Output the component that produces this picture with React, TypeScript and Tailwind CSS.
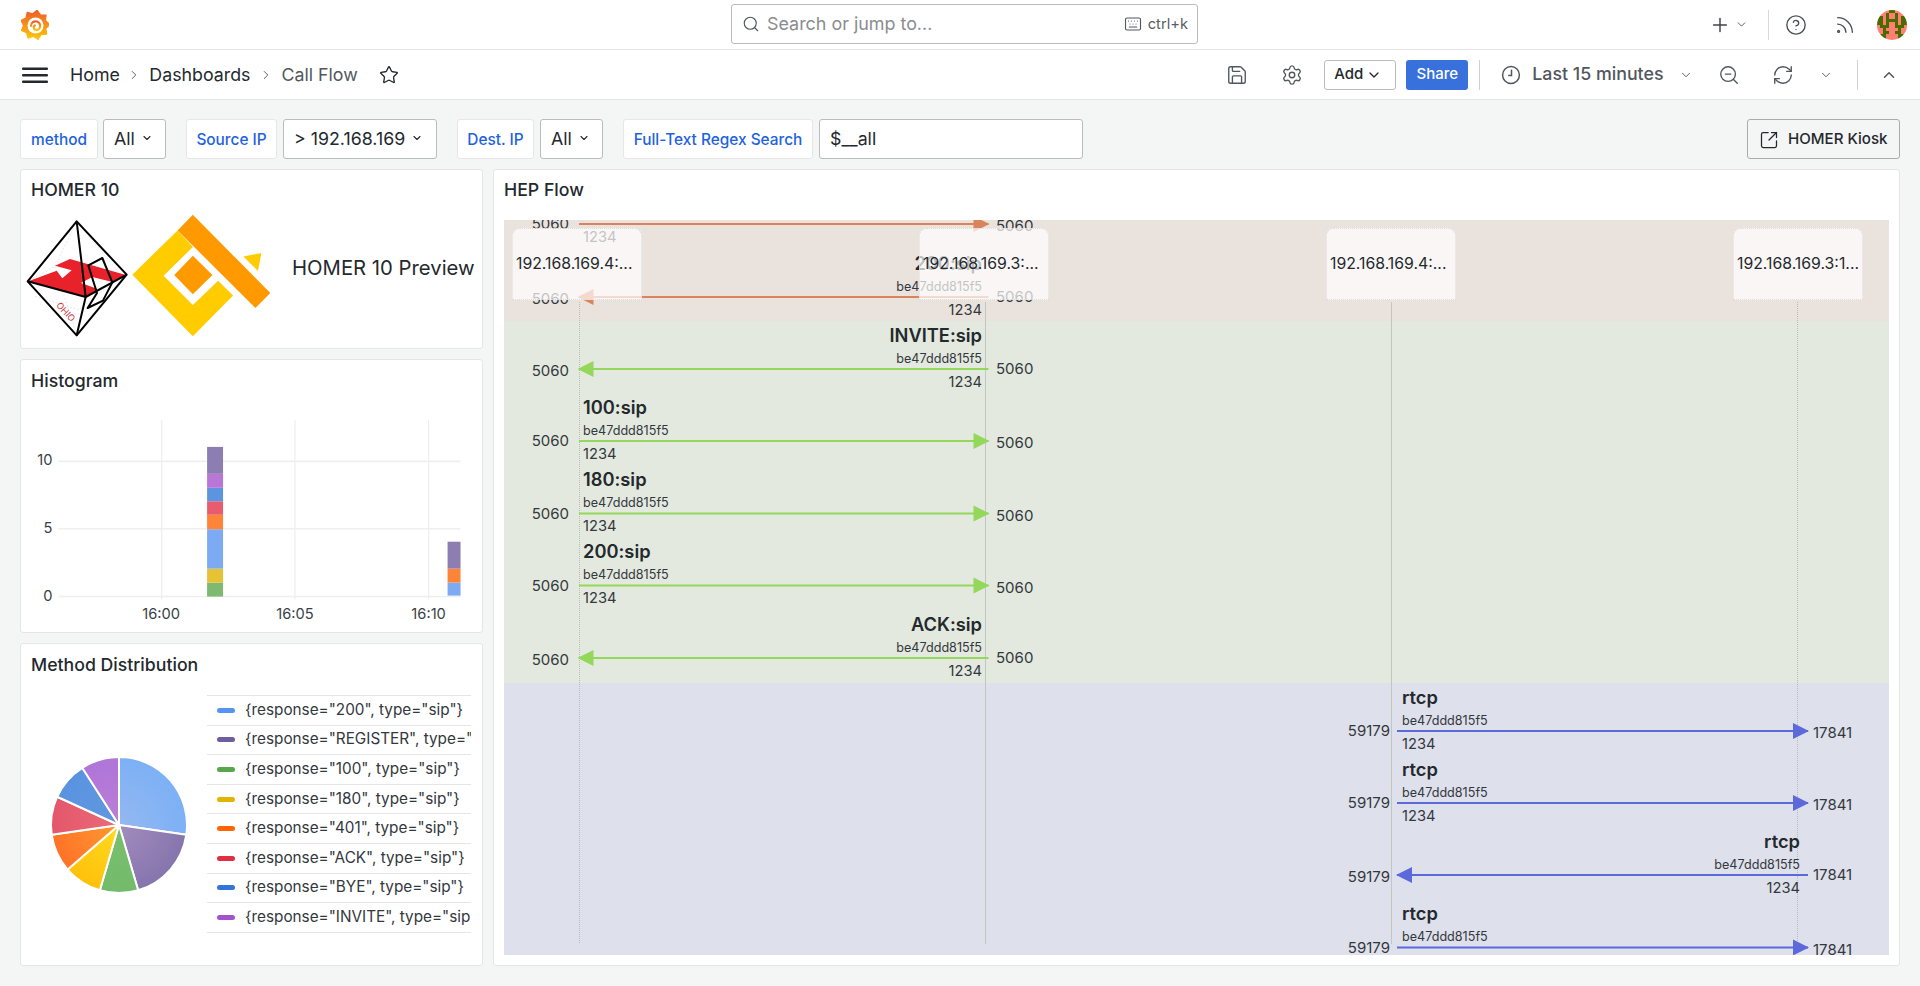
import React from "react";
import {
  ChevronDown,
  ChevronRight,
  ChevronUp,
  CircleHelp,
  Keyboard,
  Plus,
  RefreshCw,
  Rss,
  Save,
  Search,
  Settings,
  SquareArrowOutUpRight,
  Star,
  ZoomOut,
} from "lucide-react";

// flow diagram coordinates are page pixels, shifted by the canvas origin
const FLOW_X = 504;
const FLOW_Y = 220;
const FLOW_W = 1385;
const FLOW_BOTTOM = 955;

const ORANGE = "#d9845b";
const GREEN = "#93d75b";
const BLUE = "#5b69db";

interface Column {
  lines: [number, number];
  portLeft: number;
  portRight: number;
  labelLeft: number;
  labelRight: number;
  headLeft: number;
}

const SIP: Column = { lines: [579, 989.5], portLeft: 569, portRight: 996, labelLeft: 583, labelRight: 982, headLeft: 577.5 };
const RTCP: Column = { lines: [1397, 1809], portLeft: 1390, portRight: 1813, labelLeft: 1402, labelRight: 1800, headLeft: 1396 };

const messages = [
  { title: "INVITE:sip", y: 224, dir: "r", color: ORANGE, col: SIP, a: "5060", b: "5060" },
  { title: "200:sip", y: 297, dir: "l", color: ORANGE, col: SIP, a: "5060", b: "5060" },
  { title: "INVITE:sip", y: 369, dir: "l", color: GREEN, col: SIP, a: "5060", b: "5060" },
  { title: "100:sip", y: 441, dir: "r", color: GREEN, col: SIP, a: "5060", b: "5060" },
  { title: "180:sip", y: 513.5, dir: "r", color: GREEN, col: SIP, a: "5060", b: "5060" },
  { title: "200:sip", y: 585.5, dir: "r", color: GREEN, col: SIP, a: "5060", b: "5060" },
  { title: "ACK:sip", y: 658, dir: "l", color: GREEN, col: SIP, a: "5060", b: "5060" },
  { title: "rtcp", y: 731, dir: "r", color: BLUE, col: RTCP, a: "59179", b: "17841" },
  { title: "rtcp", y: 803, dir: "r", color: BLUE, col: RTCP, a: "59179", b: "17841" },
  { title: "rtcp", y: 875, dir: "l", color: BLUE, col: RTCP, a: "59179", b: "17841" },
  { title: "rtcp", y: 947.5, dir: "r", color: BLUE, col: RTCP, a: "59179", b: "17841" },
];

const nodes = [
  { x: 512, label: "192.168.169.4:..." },
  { x: 919, label: "192.168.169.3:..." },
  { x: 1326, label: "192.168.169.4:..." },
  { x: 1733, label: "192.168.169.3:1..." },
];

const legend = [
  { label: '{response="200", type="sip"}', color: "#5794f2" },
  { label: '{response="REGISTER", type="sip"}', color: "#705da0" },
  { label: '{response="100", type="sip"}', color: "#56a64b" },
  { label: '{response="180", type="sip"}', color: "#e0b400" },
  { label: '{response="401", type="sip"}', color: "#ff6600" },
  { label: '{response="ACK", type="sip"}', color: "#e02f44" },
  { label: '{response="BYE", type="sip"}', color: "#3274d9" },
  { label: '{response="INVITE", type="sip"}', color: "#a352cc" },
];

const slices = [
  { value: 3, inner: "#94b8f1", outer: "#7cb0f6" },
  { value: 2, inner: "#a48cbd", outer: "#8575ad" },
  { value: 1, inner: "#79bf6e", outer: "#73bb6b" },
  { value: 1, inner: "#ffdc1f", outer: "#ffc00c" },
  { value: 1, inner: "#ff9a30", outer: "#ff7228" },
  { value: 1, inner: "#e96d78", outer: "#e4566c" },
  { value: 1, inner: "#6297de", outer: "#5993e0" },
  { value: 1, inner: "#bb7fd6", outer: "#af75d8" },
];

// stacks are [bottom, top, colour] in page pixels
const bars = [
  { x: 207, w: 16, stack: [
    [597, 583, "#7eb871"], [583, 569, "#e5c334"], [569, 529.5, "#7cabf3"], [529.5, 515, "#ff8437"],
    [515, 501.5, "#e95c6d"], [501.5, 488, "#5c94e0"], [488, 474, "#b876d6"], [474, 447, "#8d7eb2"],
  ] },
  { x: 448, w: 13, stack: [
    [596, 583, "#7cabf3"], [583, 569, "#ff8437"], [569, 542, "#8d7eb2"],
  ] },
];

const avatarRows = [
  "GGSSGGSSGG",
  "GSSGSSGSSG",
  "GGSGSSGSGG",
  "GGSGGGGSGG",
  "GGSGSSGSGG",
  "SGGGSSGGGS",
  "SSGSSSSGSS",
  "SSGGSSGGSS",
  "SGGSSSSGGS",
  "GGGSSSSGGG",
];

function polar(cx: number, cy: number, r: number, deg: number) {
  const a = ((deg - 90) * Math.PI) / 180;
  return [cx + r * Math.cos(a), cy + r * Math.sin(a)];
}

function gearPoints() {
  const pts: string[] = [];
  for (let i = 0; i < 18; i++) {
    const [x, y] = polar(14, 15, i % 2 === 0 ? 14.8 : 11.4, i * 20 + 8);
    pts.push(`${x.toFixed(1)},${y.toFixed(1)}`);
  }
  return pts.join(" ");
}

const GrafanaLogo = () => (
  <svg viewBox="0 0 28 30" className="w-[28px] h-[30px]">
    <defs>
      <linearGradient id="gf" x1="0" y1="0" x2="0" y2="1">
        <stop offset="0" stopColor="#f05a28" />
        <stop offset="1" stopColor="#fbca0a" />
      </linearGradient>
    </defs>
    <polygon points={gearPoints()} fill="url(#gf)" stroke="url(#gf)" strokeWidth="1.2" strokeLinejoin="round" />
    <circle cx="14.5" cy="15.5" r="8" fill="white" />
    <path d="M10 16a4.6 4.6 0 1 1 8.2 2.8a3.5 3.5 0 0 1 -4.8 .4a2.5 2.5 0 0 1 .5 -3.8" fill="none" stroke="url(#gf)" strokeWidth="2.2" strokeLinecap="round" />
  </svg>
);

const Avatar = () => (
  <svg viewBox="0 0 10 10" className="w-[30px] h-[30px] rounded-full shrink-0">
    {avatarRows.map((row, r) =>
      row.split("").map((c, i) => (
        <rect key={`${r}-${i}`} x={i} y={r} width="1.02" height="1.02" fill={c === "G" ? "#4b6b00" : "#ff8070"} />
      )),
    )}
  </svg>
);

const ClockIcon = () => (
  <svg viewBox="0 0 20 20" className="w-[20px] h-[20px]" fill="none" stroke="#52575c" strokeWidth="1.5" strokeLinecap="round">
    <circle cx="10" cy="10" r="8.4" />
    <path d="M10.5 5.2v5.3H7.8" />
  </svg>
);

const MenuIcon = () => (
  <svg viewBox="0 0 26 16" className="w-[26px] h-[16px] ml-[22px]" fill="#24292e">
    <rect x="0" y="0.5" width="26" height="2.4" rx="1" />
    <rect x="0" y="7" width="26" height="2.4" rx="1" />
    <rect x="0" y="13.5" width="26" height="2.4" rx="1" />
  </svg>
);

const HomerLogo = () => (
  <svg viewBox="30 55 315 360" className="w-[105px] h-[120px] shrink-0">
    <g stroke="#dddddd" strokeWidth="2" strokeDasharray="6 5" fill="none">
      <path d="M185 65L120 200L38 245" />
      <path d="M185 65L300 205" />
      <path d="M120 200L185 407" />
      <path d="M60 290L190 330L300 245" />
    </g>
    <polygon points="42,244 125,213 142,236 170,212 120,198 165,178 330,225 292,247 232,232 198,250 248,268 212,292" fill="#e8212b" />
    <text x="122" y="318" fontSize="27" fill="#c63a3f" fontFamily="Inter, sans-serif" transform="rotate(47 122 318)">OHIO</text>
    <g fill="none" stroke="#000000" strokeWidth="6" strokeLinejoin="round">
      <path d="M185 65L335 225L185 407L38 245Z" />
      <path d="M38 245L212 292L335 225" />
      <path d="M185 65L212 292L185 407" />
      <path d="M220 197L262 175L292 248L264 303L218 325L246 280Z" />
    </g>
  </svg>
);

const HepicLogo = () => (
  <svg viewBox="345 40 430 375" className="w-[143px] h-[125px] shrink-0">
    <polygon points="488,92 534,142 446,228 534,316 610,243 655,288 534,410 352,225" fill="#ffcc00" />
    <polygon points="534,45 767,280 722,325 488,92" fill="#ff9900" />
    <polygon points="534,168 593,226 534,284 478,226" fill="#ff9900" />
    <polygon points="686,170 740,160 730,214" fill="#ffcc00" />
  </svg>
);

const VarLabel = ({ w, children }: { w: string; children: React.ReactNode }) => (
  <div className={`${w} h-[40px] pt-[1px] flex items-center justify-center bg-white border border-[#e6e8e8] rounded-[3px] text-[15.4px] font-medium text-[#1f62e0] whitespace-nowrap`}>
    {children}
  </div>
);

const VarSelect = ({ w, children }: { w: string; children: React.ReactNode }) => (
  <div className={`${w} h-[40px] pt-[1px] flex items-center pl-[10px] gap-[6px] bg-white border border-[#b9bcbf] rounded-[3px] text-[17.8px] text-[#24292e] whitespace-nowrap`}>
    {children}
    <ChevronDown size={12} strokeWidth={2.2} className="text-[#24292e] mb-[3px]" />
  </div>
);

const Panel = ({ title, className, titleClass, children }: { title: string; className: string; titleClass?: string; children: React.ReactNode }) => (
  <div className={`${className} bg-white border border-[#e4e6e6] rounded-[3px] overflow-hidden flex flex-col`}>
    <div className={`h-[43px] shrink-0 pl-[10px] flex items-center text-[17.7px] font-medium text-[#24292e] ${titleClass ?? ""}`}>{title}</div>
    {children}
  </div>
);

const Histogram = () => (
  <svg viewBox="21 403 460 229" className="w-[460px] h-[229px]" fontFamily="Inter, sans-serif" fontSize="14.7" fill="#3a3f44">
    {[161.5, 295, 429].map((x) => (
      <line key={x} x1={x} x2={x} y1="420" y2="600" stroke="#eeeeee" strokeWidth="1.2" />
    ))}
    {[461.5, 529, 597].map((y) => (
      <line key={y} x1="58" x2="461" y1={y} y2={y} stroke="#efefef" strokeWidth="1.6" />
    ))}
    {bars.map((b) =>
      b.stack.map(([bottom, top, color]) => (
        <rect key={`${b.x}-${bottom}`} x={b.x} width={b.w} y={top as number} height={(bottom as number) - (top as number)} fill={color as string} />
      )),
    )}
    <text x="52" y="465" textAnchor="end">10</text>
    <text x="52" y="533" textAnchor="end">5</text>
    <text x="52" y="601" textAnchor="end">0</text>
    <text x="161" y="619" textAnchor="middle">16:00</text>
    <text x="295" y="619" textAnchor="middle">16:05</text>
    <text x="429" y="619" textAnchor="middle">16:10</text>
  </svg>
);

const Pie = () => {
  const total = slices.reduce((s, x) => s + x.value, 0);
  let deg = 0;
  return (
    <svg viewBox="21 695 186 262" className="w-[186px] h-[262px] shrink-0">
      <defs>
        {slices.map((s, i) => (
          <radialGradient key={i} id={`slice-${i}`} gradientUnits="userSpaceOnUse" cx="119" cy="825" r="68">
            <stop offset="0" stopColor={s.inner} />
            <stop offset="1" stopColor={s.outer} />
          </radialGradient>
        ))}
      </defs>
      {slices.map((s, i) => {
        const start = deg;
        deg += (s.value / total) * 360;
        const [x1, y1] = polar(119, 825, 68, start);
        const [x2, y2] = polar(119, 825, 68, deg);
        const large = deg - start > 180 ? 1 : 0;
        return (
          <path
            key={i}
            d={`M119 825L${x1} ${y1}A68 68 0 ${large} 1 ${x2} ${y2}Z`}
            fill={`url(#slice-${i})`}
            stroke="white"
            strokeWidth="2"
            strokeLinejoin="round"
          />
        );
      })}
    </svg>
  );
};

const Legend = () => (
  <div className="w-[264px] border-b border-[#e4e6e6] overflow-hidden">
    {legend.map((l) => (
      <div key={l.label} className="h-[29.6px] border-t border-[#e4e6e6] flex items-center pl-[10px] whitespace-nowrap text-[15.3px] text-[#33383d]">
        <span className="w-[18px] h-[5px] rounded-full mr-[10px] shrink-0" style={{ backgroundColor: l.color }} />
        {l.label}
      </div>
    ))}
  </div>
);

const FlowLabel = ({ x, y, right, className, children }: { x: number; y: number; right?: boolean; className: string; children: React.ReactNode }) => (
  <div
    className={`absolute -translate-y-1/2 whitespace-nowrap leading-none ${className}`}
    style={right ? { right: FLOW_W - (x - FLOW_X), top: y - FLOW_Y } : { left: x - FLOW_X, top: y - FLOW_Y }}
  >
    {children}
  </div>
);

const HepFlow = () => (
  <div className="relative h-[735px] overflow-hidden text-[#24292e]">
    <div className="h-[101px] bg-[#eae2dd]" />
    <div className="h-[362px] bg-[#e3e9de]" />
    <div className="h-[272px] bg-[#dee0eb]" />

    {/* lifelines and arrows */}
    <svg className="absolute inset-0 w-full h-full" viewBox={`${FLOW_X} ${FLOW_Y} ${FLOW_W} 735`}>
      <line x1="579.5" x2="579.5" y1="302" y2="944" stroke="#b9bcba" strokeDasharray="1 1" />
      <line x1="985.5" x2="985.5" y1="302" y2="944" stroke="#c2c5c4" />
      <line x1="1391.5" x2="1391.5" y1="302" y2="944" stroke="#c2c5c4" />
      <line x1="1797.5" x2="1797.5" y1="302" y2="944" stroke="#b9bcba" strokeDasharray="1 1" />
      {messages.map((m) => {
        const [l, r] = m.col.lines;
        const h = m.col.headLeft;
        return (
          <g key={m.y}>
            <rect x={l} y={m.y - 1} width={r - l - 1} height="2" fill={m.color} />
            {m.dir === "r" ? (
              <polygon points={`${r - 16},${m.y - 8} ${r},${m.y} ${r - 16},${m.y + 8}`} fill={m.color} />
            ) : (
              <polygon points={`${h + 16},${m.y - 8} ${h},${m.y} ${h + 16},${m.y + 8}`} fill={m.color} />
            )}
          </g>
        );
      })}
    </svg>

    {messages.map((m) => {
      const isLeft = m.dir === "l";
      const x = isLeft ? m.col.labelRight : m.col.labelLeft;
      return (
        <React.Fragment key={m.y}>
          <FlowLabel x={x} y={m.y - 34.5} right={isLeft} className="text-[18.3px] font-semibold">{m.title}</FlowLabel>
          <FlowLabel x={x} y={m.y - 10.5} right={isLeft} className="text-[12.6px] text-[#33383d]">be47ddd815f5</FlowLabel>
          {m.y + 12.5 < FLOW_BOTTOM && (
            <FlowLabel x={x} y={m.y + 12.5} right={isLeft} className="text-[14.7px] text-[#33383d]">1234</FlowLabel>
          )}
          <FlowLabel x={m.col.portLeft} y={m.y + (isLeft ? 1 : -1)} right className="text-[15px] text-[#33383d]">{m.a}</FlowLabel>
          <FlowLabel x={m.col.portRight} y={m.y + (isLeft ? -1 : 1)} className="text-[15px] text-[#33383d]">{m.b}</FlowLabel>
        </React.Fragment>
      );
    })}

    {nodes.map((n) => (
      <div
        key={n.x}
        className="absolute w-[130px] h-[72px] top-[8px] flex items-center pl-[3px] overflow-hidden rounded-t-[8px] bg-white/70 border border-dotted border-[#dcdcdc] text-[15.8px] whitespace-nowrap"
        style={{ left: n.x - FLOW_X }}
      >
        {n.label}
      </div>
    ))}
  </div>
);

export default function App() {
  return (
    <div className="w-[1920px] h-[986px] overflow-hidden bg-[#f4f5f5] font-[Inter,sans-serif] text-[#24292e]">
      {/* top bar */}
      <div className="h-[50px] bg-white border-b border-[#e4e6e6] flex items-center pr-[13px]">
        <div className="ml-[21px] w-[28px]"><GrafanaLogo /></div>
        <div className="ml-[682px] w-[467px] h-[40px] border border-[#b9bcbf] rounded-[3px] flex items-center pl-[10px] pr-[9px] mb-[1px]">
          <Search size={18} strokeWidth={1.5} className="text-[#52575c]" />
          <span className="ml-[7px] text-[17.9px] text-[#8a8d90]">Search or jump to...</span>
          <Keyboard size={18} strokeWidth={1.5} className="ml-auto text-[#52575c]" />
          <span className="ml-[6px] text-[14.7px] text-[#5a5e63]">ctrl+k</span>
        </div>
        <Plus size={22} strokeWidth={1.6} className="ml-auto text-[#3f4449]" />
        <ChevronDown size={13} strokeWidth={1.6} className="ml-[4.5px] text-[#3f4449]" />
        <div className="ml-[20px] w-px h-[30px] bg-[#d7d9da]" />
        <CircleHelp size={22} strokeWidth={1.5} className="ml-[16px] text-[#4b5055]" />
        <Rss size={22} strokeWidth={1.5} className="ml-[27px] text-[#4b5055]" />
        <div className="ml-[21px]"><Avatar /></div>
      </div>

      {/* breadcrumb bar */}
      <div className="h-[50px] bg-white border-b border-[#e4e6e6] flex items-center pr-[22.4px] text-[17.8px]">
        <MenuIcon />
        <span className="ml-[22px] pt-[1px]">Home</span>
        <ChevronRight size={14} strokeWidth={1.6} className="ml-[7px] text-[#52575c]" />
        <span className="ml-[8.5px] pt-[1px]">Dashboards</span>
        <ChevronRight size={14} strokeWidth={1.6} className="ml-[8.5px] text-[#52575c]" />
        <span className="ml-[8.5px] pt-[1px] text-[#52575c]">Call Flow</span>
        <Star size={20} strokeWidth={1.6} className="ml-[21px]" />
        <Save size={22} strokeWidth={1.5} className="ml-auto text-[#52575c]" />
        <Settings size={22} strokeWidth={1.5} className="ml-[33px] text-[#52575c]" />
        <div className="ml-[21px] w-[71.5px] h-[30px] pl-[9px] border border-[#b9bcbf] rounded-[3px] flex items-center gap-[3px] text-[15px] font-medium">
          Add
          <ChevronDown size={16} strokeWidth={2} />
        </div>
        <div className="ml-[10.5px] w-[62px] h-[30px] rounded-[3px] bg-[#3871dc] text-white flex items-center justify-center text-[15px] font-medium">Share</div>
        <div className="ml-[11px] w-px h-[30px] bg-[#d0d2d3]" />
        <div className="ml-[21px]"><ClockIcon /></div>
        <span className="ml-[11px] font-medium text-[#52575c] whitespace-nowrap">Last 15 minutes</span>
        <ChevronDown size={14} strokeWidth={1.6} className="ml-[15.5px] text-[#52575c]" />
        <ZoomOut size={22} strokeWidth={1.5} className="ml-[24.5px] text-[#52575c]" />
        <RefreshCw size={22} strokeWidth={1.5} className="ml-[32px] text-[#52575c]" />
        <ChevronDown size={14} strokeWidth={1.6} className="ml-[25px] text-[#52575c]" />
        <div className="ml-[24.5px] w-px h-[30px] bg-[#d0d2d3]" />
        <ChevronUp size={18} strokeWidth={2} className="ml-[21.6px] text-[#52575c]" />
      </div>

      {/* variables */}
      <div className="mt-[19px] px-[20px] flex items-center">
        <VarLabel w="w-[78px]">method</VarLabel>
        <div className="ml-[5px]"><VarSelect w="w-[63px]">All</VarSelect></div>
        <div className="ml-[20px]"><VarLabel w="w-[91px]">Source IP</VarLabel></div>
        <div className="ml-[6px]"><VarSelect w="w-[154px]">&gt; 192.168.169</VarSelect></div>
        <div className="ml-[20px]"><VarLabel w="w-[77px]">Dest. IP</VarLabel></div>
        <div className="ml-[6px]"><VarSelect w="w-[63px]">All</VarSelect></div>
        <div className="ml-[20px]"><VarLabel w="w-[190px]">Full-Text Regex Search</VarLabel></div>
        <div className="ml-[6px] w-[264px] h-[40px] pt-[1px] flex items-center px-[10px] bg-white border border-[#b9bcbf] rounded-[3px] text-[17.8px]">$__all</div>
        <div className="ml-auto w-[153px] h-[40px] pt-[1px] flex items-center pl-[11px] border border-[#a9acaf] rounded-[3px] text-[15.1px] font-medium">
          <SquareArrowOutUpRight size={20} strokeWidth={1.5} />
          <span className="ml-[9px] whitespace-nowrap">HOMER Kiosk</span>
        </div>
      </div>

      {/* panels */}
      <div className="mt-[9.5px] px-[20px] flex gap-[10.5px]">
        <div className="w-[462.5px] shrink-0 flex flex-col gap-[10.5px]">
          <Panel title="HOMER 10" titleClass="pb-[2px]" className="h-[180px]">
            <div className="flex-1 flex items-end pl-[4px] pb-[10px]">
              <HomerLogo />
              <HepicLogo />
              <div className="ml-[19px] mb-[54px] text-[20.3px] whitespace-nowrap">HOMER 10 Preview</div>
            </div>
          </Panel>
          <Panel title="Histogram" className="h-[273.5px]">
            <Histogram />
          </Panel>
          <Panel title="Method Distribution" className="h-[323px]">
            <div className="flex items-start pt-[8px]">
              <Pie />
              <Legend />
            </div>
          </Panel>
        </div>
        <div className="flex-1 h-[797.5px] bg-white border border-[#e4e6e6] rounded-[3px] flex flex-col px-[10px]">
          <div className="h-[50.5px] shrink-0 pb-[9px] flex items-center text-[17.7px] font-medium">HEP Flow</div>
          <HepFlow />
        </div>
      </div>
    </div>
  );
}
